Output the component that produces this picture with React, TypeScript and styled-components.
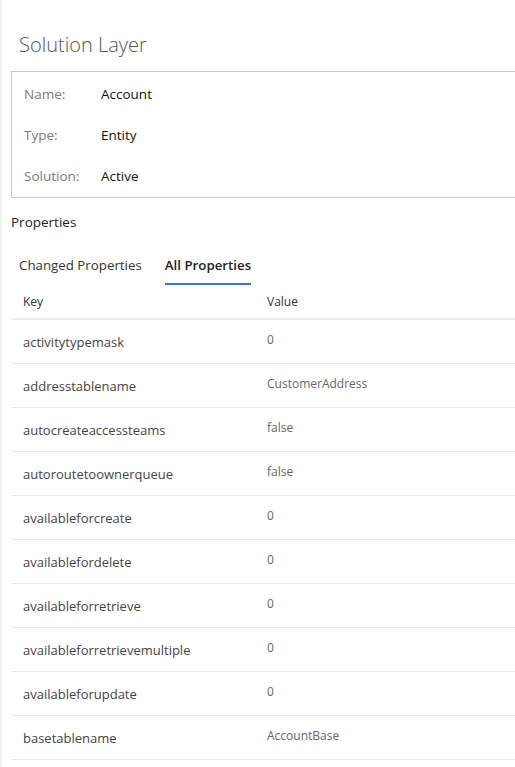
import styled, { createGlobalStyle } from "styled-components";

const GlobalStyle = createGlobalStyle`
  html, body {
    margin: 0;
    padding: 0;
    background: #ffffff;
    overflow: hidden;
  }
  body {
    font-family: "Segoe UI", "Open Sans", "Liberation Sans", sans-serif;
    color: #333333;
  }
`;

const Page = styled.div`
  width: 640px;
  min-height: 767px;
  border-left: 2px solid #f3f3f3;
  padding-left: 9px;
  box-sizing: border-box;
`;

const Title = styled.h1`
  margin: 0;
  padding: 30px 0 11px 8px;
  font-size: 20px;
  font-weight: 300;
  line-height: 30px;
  color: #555555;
`;

const InfoBox = styled.div`
  border: 1px solid #c8c8c8;
  padding: 1px 0 1px 12px;
`;

const InfoRow = styled.div`
  display: flex;
  align-items: center;
  height: 41px;
  font-size: 13.5px;
`;

const InfoLabel = styled.span`
  width: 77px;
  color: #7a7a80;
`;

const InfoValue = styled.span`
  color: #111111;
`;

const SectionTitle = styled.div`
  margin-top: 14px;
  font-size: 13.5px;
  line-height: 20px;
  color: #222222;
`;

const TabBar = styled.div`
  display: flex;
  gap: 23px;
  margin-top: 13px;
  padding-left: 8px;
`;

const Tab = styled.div<{ $active?: boolean }>`
  padding: 10px 0 8px;
  line-height: 20px;
  font-size: 13.3px;
  font-weight: ${({ $active }) => ($active ? 600 : 400)};
  color: ${({ $active }) => ($active ? "#222222" : "#333333")};
  border-bottom: 2px solid ${({ $active }) => ($active ? "#3d74d6" : "transparent")};
`;

const Table = styled.div`
  display: flex;
  flex-direction: column;
`;

const HeaderRow = styled.div`
  display: flex;
  align-items: center;
  height: 35px;
  padding-left: 12px;
  border-bottom: 2px solid #ebebeb;
  box-sizing: border-box;
`;

const Row = styled.div`
  display: flex;
  align-items: center;
  height: 44px;
  padding-left: 12px;
  border-bottom: 1px solid #ebebeb;
  box-sizing: border-box;
`;

const KeyCell = styled.div<{ $header?: boolean }>`
  width: 244px;
  font-size: ${({ $header }) => ($header ? "12px" : "13px")};
  color: ${({ $header }) => ($header ? "#333333" : "#444444")};
`;

const ValueCell = styled.div<{ $header?: boolean }>`
  font-size: 12px;
  color: ${({ $header }) => ($header ? "#333333" : "#666666")};
  padding-bottom: ${({ $header }) => ($header ? "0" : "4px")};
`;

const properties: [string, string][] = [
  ["activitytypemask", "0"],
  ["addresstablename", "CustomerAddress"],
  ["autocreateaccessteams", "false"],
  ["autoroutetoownerqueue", "false"],
  ["availableforcreate", "0"],
  ["availablefordelete", "0"],
  ["availableforretrieve", "0"],
  ["availableforretrievemultiple", "0"],
  ["availableforupdate", "0"],
  ["basetablename", "AccountBase"],
];

function App() {
  return (
    <Page>
      <GlobalStyle />
      <Title>Solution Layer</Title>
      <InfoBox>
        <InfoRow>
          <InfoLabel>Name:</InfoLabel>
          <InfoValue>Account</InfoValue>
        </InfoRow>
        <InfoRow>
          <InfoLabel>Type:</InfoLabel>
          <InfoValue>Entity</InfoValue>
        </InfoRow>
        <InfoRow>
          <InfoLabel>Solution:</InfoLabel>
          <InfoValue>Active</InfoValue>
        </InfoRow>
      </InfoBox>
      <SectionTitle>Properties</SectionTitle>
      <TabBar>
        <Tab>Changed Properties</Tab>
        <Tab $active>All Properties</Tab>
      </TabBar>
      <Table>
        <HeaderRow>
          <KeyCell $header>Key</KeyCell>
          <ValueCell $header>Value</ValueCell>
        </HeaderRow>
        {properties.map(([key, value]) => (
          <Row key={key}>
            <KeyCell>{key}</KeyCell>
            <ValueCell>{value}</ValueCell>
          </Row>
        ))}
      </Table>
    </Page>
  );
}

export default App;
